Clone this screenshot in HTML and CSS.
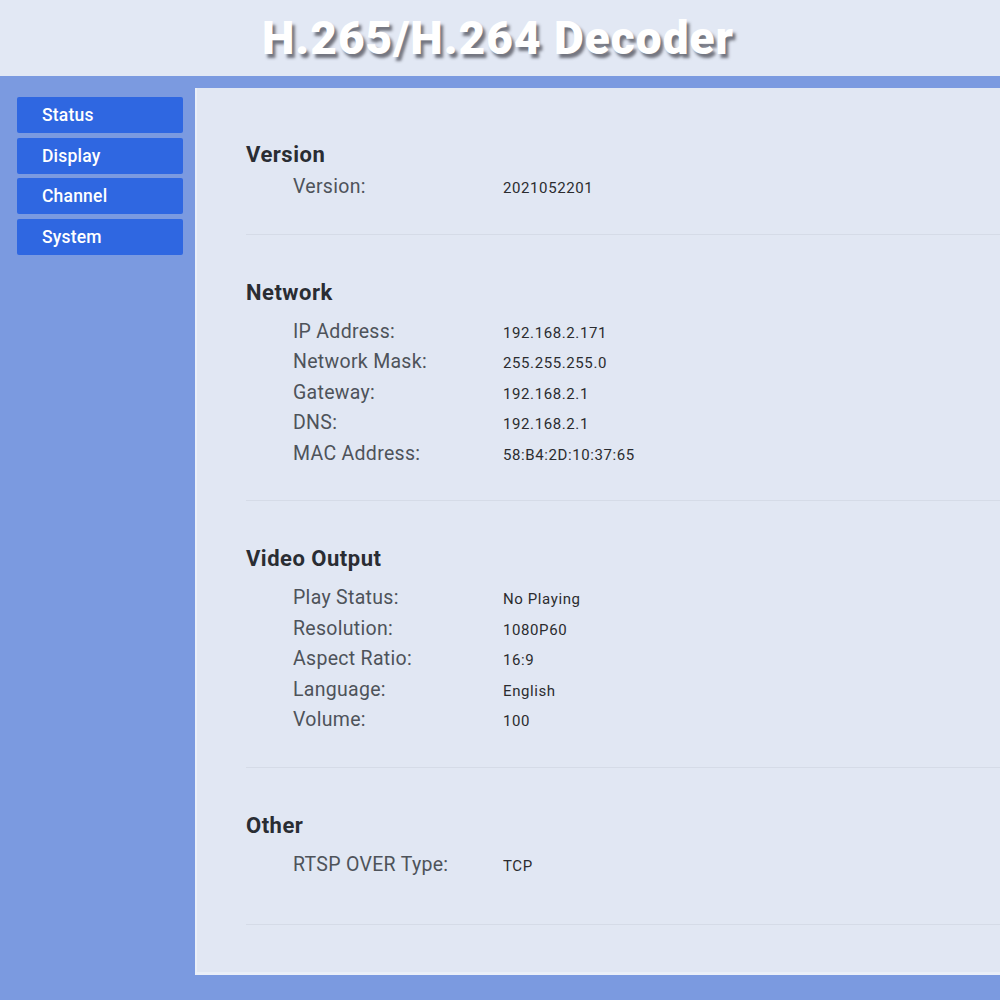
FILE: index.html
```html
<!DOCTYPE html>
<html lang="en">
<head>
<meta charset="utf-8">
<title>H.265/H.264 Decoder</title>
<link rel="stylesheet" href="styles.css">
</head>
<body>
<header class="top">
  <h1 class="title">H.265/H.264 Decoder</h1>
</header>
<div class="main">
  <nav class="side">
    <a class="nav-btn">Status</a>
    <a class="nav-btn">Display</a>
    <a class="nav-btn">Channel</a>
    <a class="nav-btn">System</a>
  </nav>
  <div class="panel">
    <section class="sec sec-first">
      <h2 class="sec-title">Version</h2>
      <div class="rows rows-tight">
        <div class="row"><span class="lbl">Version:</span><span class="val">2021052201</span></div>
      </div>
    </section>
    <section class="sec">
      <h2 class="sec-title">Network</h2>
      <div class="rows">
        <div class="row"><span class="lbl">IP Address:</span><span class="val">192.168.2.171</span></div>
        <div class="row"><span class="lbl">Network Mask:</span><span class="val">255.255.255.0</span></div>
        <div class="row"><span class="lbl">Gateway:</span><span class="val">192.168.2.1</span></div>
        <div class="row"><span class="lbl">DNS:</span><span class="val">192.168.2.1</span></div>
        <div class="row"><span class="lbl">MAC Address:</span><span class="val">58:B4:2D:10:37:65</span></div>
      </div>
    </section>
    <section class="sec">
      <h2 class="sec-title">Video Output</h2>
      <div class="rows">
        <div class="row"><span class="lbl">Play Status:</span><span class="val">No Playing</span></div>
        <div class="row"><span class="lbl">Resolution:</span><span class="val">1080P60</span></div>
        <div class="row"><span class="lbl">Aspect Ratio:</span><span class="val">16:9</span></div>
        <div class="row"><span class="lbl">Language:</span><span class="val">English</span></div>
        <div class="row"><span class="lbl">Volume:</span><span class="val">100</span></div>
      </div>
    </section>
    <section class="sec sec-last">
      <h2 class="sec-title">Other</h2>
      <div class="rows">
        <div class="row"><span class="lbl">RTSP OVER Type:</span><span class="val">TCP</span></div>
      </div>
    </section>
  </div>
</div>
</body>
</html>
```
FILE: styles.css
```css
* { box-sizing: border-box; }

html, body {
  margin: 0;
  padding: 0;
}

body {
  background: #7b9ae0;
  font-family: Roboto, "Liberation Sans", Arial, sans-serif;
  width: 1000px;
  overflow: hidden;
}

.top {
  height: 76px;
  background: #e2e8f4;
  display: flex;
  justify-content: center;
  align-items: center;
}

.title {
  margin: 0;
  font-size: 46px;
  font-weight: 900;
  letter-spacing: 1px;
  color: #ffffff;
  line-height: 76px;
  text-shadow: 3px 4px 3px rgba(40, 40, 50, 0.6);
  padding-right: 4px;
}

.main {
  display: flex;
  padding-top: 12px;
  padding-bottom: 25px;
}

.side {
  width: 195px;
  flex: 0 0 195px;
  padding: 9px 0 0 17px;
  display: flex;
  flex-direction: column;
  gap: 4.7px;
}

.nav-btn {
  display: block;
  width: 166px;
  height: 36px;
  line-height: 36px;
  background: #2f67e1;
  color: #ffffff;
  font-size: 17.5px;
  font-weight: 500;
  letter-spacing: 0.2px;
  padding-left: 25px;
  border-radius: 2px;
}

.panel {
  flex: 1;
  height: 887px;
  background: #e1e7f3;
  border-left: 2px solid #eaeff8;
  border-bottom: 3px solid #eaeff8;
  padding-left: 49px;
}

.sec {
  padding-top: 44px;
  padding-bottom: 31px;
  border-bottom: 1px solid #d5dbe7;
}

.sec-first { padding-top: 53px; }
.sec-last { padding-bottom: 44px; }

.sec-title {
  margin: 0;
  font-size: 22px;
  line-height: 27px;
  font-weight: 700;
  letter-spacing: 0.5px;
  color: #2a2d33;
}

.rows { margin-top: 11px; }
.rows-tight { margin-top: 4px; }

.row {
  display: flex;
  align-items: baseline;
  height: 30.5px;
  line-height: 30.5px;
  padding-left: 47px;
}

.lbl {
  width: 210px;
  flex: 0 0 210px;
  font-size: 19.5px;
  letter-spacing: 0.3px;
  color: #4e535a;
}

.val {
  font-size: 15px;
  letter-spacing: 0.6px;
  color: #2b2c2f;
}
```
